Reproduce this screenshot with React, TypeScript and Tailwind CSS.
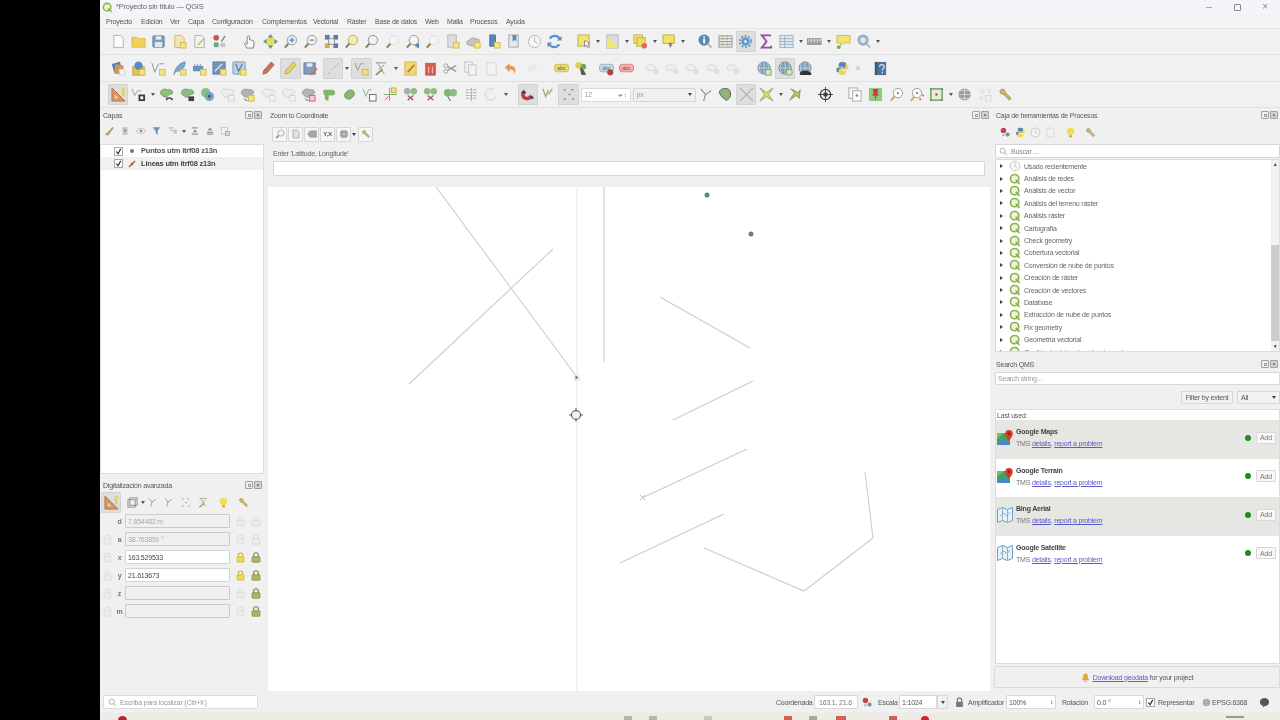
import type { ReactElement, ReactNode } from 'react'

// QGIS main window, blurred a touch because the source frame is a video still.

const mag = (lens: string, glass = '#8a8a8a') => (
  <>
    <path d="M6 10L2 14.5" stroke="#7a6a3a" strokeWidth="2.2" />
    <circle cx="9.5" cy="6.5" r="5" fill={lens} stroke={glass} />
  </>
)
const blob = (fill: string, line: string) => (
  <path d="M1.5 6c0-3 4-4.5 6-3.5s5-.5 6.5 1.500.5 4-2.500 4-2 4-4.500 3-5.500-2.500-5.500-5z" fill={fill} stroke={line} />
)
const green = blob('#7fb56c', '#5f9550')
const gray = blob('#a9a9a9', '#8f8f8f')
const pale = blob('#eeeeee', '#c9c9c9')
const badge = <rect x="9" y="9" width="6" height="6" fill="#f7e46f" stroke="#c7b24a" />
const paleBadge = <rect x="9" y="9" width="6" height="6" fill="#f3f3f3" stroke="#cfcfcf" />
const doc = (fill = '#ffffff', line = '#a3a3a3') => <path d="M3 1.500h7l3 3v10H3z" fill={fill} stroke={line} />
const abc = (fill: string, line: string, ink: string) => (
  <>
    <rect x="0.500" y="3.500" width="15" height="8" rx="3" fill={fill} stroke={line} />
    <text x="8" y="9.500" fontSize="5.500" fontWeight="700" fill={ink} textAnchor="middle" fontFamily="Liberation Sans">abc</text>
  </>
)
const paleAbc = (
  <>
    <rect x="1" y="4" width="10" height="6" rx="3" fill="#eeeeee" stroke="#d5d5d5" />
    <circle cx="11.500" cy="11" r="3" fill="#dddddd" />
  </>
)
const globe = (extra: ReactNode) => (
  <>
    <circle cx="7.500" cy="7.500" r="6.500" fill="#6f93ad" stroke="#4f7288" />
    <path d="M7.500 1v13M1 7.500h13M4 2.500c-2 3-2 7 0 10M11 2.500c2 3 2 7 0 10" stroke="#b9ced9" fill="none" />
    {extra}
  </>
)
const scissors = (tint: string) => (
  <>
    <circle cx="4.500" cy="4.500" r="3.500" fill={tint} />
    <circle cx="11.500" cy="4.500" r="3.500" fill="#7fb56c" />
    <path d="M5 9l6 5M11 9l-6 5" stroke="#a0406a" strokeWidth="1.400" />
  </>
)

const icons: Record<string, ReactElement> = {
  newDoc: doc(),
  folder: <path d="M1 3.500h5l1.500 1.500H15v9H1z" fill="#f4c93f" stroke="#dcae2b" />,
  save: (
    <>
      <rect x="2" y="2" width="12" height="12" rx="1" fill="#6a8db2" stroke="#4f6f92" />
      <rect x="5" y="2.500" width="6" height="3.500" fill="#e8eef4" />
      <rect x="4" y="8.500" width="8" height="5.500" fill="#dfe6ee" />
    </>
  ),
  saveAs: <>{doc('#f6e3a8', '#c9ad5a')}{badge}</>,
  layout: (
    <>
      {doc('#f4f4f4', '#a3a3a3')}
      <path d="M6 12l7-7" stroke="#c8b24a" strokeWidth="1.600" />
    </>
  ),
  styles: (
    <>
      <circle cx="4.500" cy="4" r="3" fill="#c0392b" />
      <rect x="2" y="9" width="5" height="5" fill="#4f9a6a" />
      <path d="M10 8l4-6" stroke="#777" strokeWidth="1.500" />
      <rect x="9" y="9.500" width="5" height="4.500" fill="#bbbbbb" />
    </>
  ),
  hand: <path d="M5 15l-2.500-5 1-1 2 2V3l1.500-1 1 1v3l2 .5 2.500 1 .5 3-1 4.500z" fill="#fbfbfb" stroke="#6b6b6b" />,
  panSel: (
    <>
      <rect x="4.500" y="4.500" width="7" height="7" fill="#f1d13d" />
      <path d="M8 0l3 4H5zM8 16l3-4H5zM0 8l4-3v6zM16 8l-4-3v6z" fill="#4d8c66" />
    </>
  ),
  zoomIn: <>{mag('#e6eef8')}<path d="M7 6.500h5M9.500 4v5" stroke="#3e6ea8" strokeWidth="1.400" /></>,
  zoomOut: <>{mag('#f4f4f4')}<path d="M7 6.500h5" stroke="#5f7f9f" strokeWidth="1.400" /></>,
  zoomFull: (
    <>
      <rect x="1" y="1" width="5" height="5" fill="#3b6aa3" />
      <rect x="10" y="1" width="5" height="5" fill="#3b6aa3" />
      <rect x="1" y="10" width="5" height="5" fill="#c9a32e" />
      <rect x="10" y="10" width="5" height="5" fill="#3b6aa3" />
      <rect x="5" y="5" width="6" height="6" fill="#f3f3f3" stroke="#7a7a7a" />
    </>
  ),
  zoomLayer: mag('#f6eda6', '#a09a4e'),
  zoomSel: mag('#f4f4f0', '#777777'),
  zoomNative: mag('#f6f6f6', '#d6d6d6'),
  zoomLast: <>{mag('#f4f4f4')}<path d="M15 9l-5 3.500 5 3z" fill="#3c74ad" /></>,
  zoomNext: mag('#f6f6f6', '#d6d6d6'),
  newMap: <><rect x="3" y="1" width="9" height="13" fill="#dcdcdc" stroke="#a9a9a9" />{badge}</>,
  map3d: <><path d="M1 8l6-4 7 2v5l-7 2-6-2z" fill="#bdbdbd" stroke="#9a9a9a" />{badge}</>,
  bookNew: <><path d="M4 1h6v12H4z" fill="#3d75b5" stroke="#2f5f96" />{badge}</>,
  bookShow: <><rect x="3" y="1" width="10" height="13" fill="#e6e6e6" stroke="#9a9a9a" /><path d="M7 1v7l2-2 2 2V1" fill="#3d75b5" /></>,
  clock: <><circle cx="8" cy="8" r="6.500" fill="#f7f7f7" stroke="#a9a9a9" /><path d="M8 3.500V8l3 2" stroke="#a9a9a9" fill="none" /></>,
  refresh: (
    <>
      <path d="M13.500 5A6 6 0 0 0 3 5" stroke="#3b83bd" strokeWidth="2.400" fill="none" />
      <path d="M2.500 11A6 6 0 0 0 13 11" stroke="#3b83bd" strokeWidth="2.400" fill="none" />
      <path d="M15.500 2v5h-5zM.5 14V9h5z" fill="#3b83bd" />
    </>
  ),
  selFeat: <><rect x="1" y="1" width="12" height="12" fill="#f4e25d" stroke="#b1a343" /><path d="M8 7l6 3-2.500 1 2 3-1.500 1-2-3-2 1.500z" fill="#fff" stroke="#777" /></>,
  selBox: <><rect x="2" y="1" width="12" height="14" fill="#d9d9d9" stroke="#aaa" /><path d="M2 3l12 12H2z" fill="#f4e25d" /></>,
  deselect: <><rect x="1" y="1" width="9" height="9" fill="#f4e25d" stroke="#b59f32" /><rect x="4" y="4" width="9" height="9" fill="#f4d83f" stroke="#b59f32" /><circle cx="12" cy="12.500" r="3" fill="#d9534f" /></>,
  selLoc: <><rect x="1" y="1" width="12" height="9" fill="#f4e14f" stroke="#b59f32" /><path d="M9 9c-2 0-2.500 2-1.500 3l1.500 3 1.500-3c1-1 .5-3-1.500-3z" fill="#777" /></>,
  identify: <><circle cx="6.500" cy="6.500" r="6" fill="#3d78b2" /><rect x="5.500" y="5" width="2" height="5" fill="#fff" /><rect x="5.500" y="2.500" width="2" height="1.500" fill="#fff" /><path d="M10 10l4.500 4.500" stroke="#aaa" strokeWidth="2" /></>,
  attrStat: <><rect x="1" y="2" width="14" height="12" fill="#e8e8e8" stroke="#888" /><path d="M1 5h14M1 8h14M1 11h14" stroke="#6e9f5f" /><path d="M5 2v12M10 2v12" stroke="#b65a4a" strokeDasharray="1 2" /></>,
  gear: <><circle cx="8" cy="8" r="4.500" fill="#4d8fc9" /><circle cx="8" cy="8" r="6" fill="none" stroke="#4d8fc9" strokeWidth="2" strokeDasharray="2 1.800" /><circle cx="8" cy="8" r="1.600" fill="#dce9f4" /></>,
  sigma: <path d="M13 1.500H3l5 6.500-5 6.500h10v-2" fill="none" stroke="#8e2c96" strokeWidth="2" />,
  table: <><rect x="1" y="1.500" width="14" height="13" fill="#dfe9f3" stroke="#8ba6c0" /><path d="M1 5h14M1 8h14M1 11h14M6 1.500v13" stroke="#8ba6c0" /></>,
  ruler: <><rect x="0" y="5" width="15" height="6" fill="#9a9a9a" stroke="#777" /><path d="M2 5v3M5 5v3M8 5v3M11 5v3M14 5v3" stroke="#eee" /></>,
  note: <><path d="M1 1.500h14v8H8l-3 3v-3H1z" fill="#f4e25d" stroke="#c5b23f" /><circle cx="3" cy="14" r="2" fill="#6a9a55" /></>,
  search: <><circle cx="7.500" cy="6.500" r="6" fill="#8aa5bd" /><circle cx="7.500" cy="6.500" r="3" fill="#dbe7f0" /><path d="M11 10l4 4.500" stroke="#aaa" strokeWidth="2" /></>,

  layerMgr: <><rect x="2" y="2" width="9" height="10" fill="#3f6fa5" transform="rotate(-15 6 7)" /><rect x="4" y="4" width="9" height="10" fill="#c58a3a" transform="rotate(8 8 9)" />{paleBadge}</>,
  gpkg: <><rect x="2" y="6" width="12" height="9" fill="#e5c23a" stroke="#b2932a" /><circle cx="8" cy="5" r="4.500" fill="#3f7cb1" />{badge}</>,
  vertex: <><path d="M1 2l3 10 4-9M9 3h5" fill="none" stroke="#7e7e7e" />{badge}</>,
  feather: <><path d="M2 15C3 7 8 2 14 1c0 6-4 10-9 10" fill="#6d9bc4" stroke="#4e7da8" />{badge}</>,
  chip: <><rect x="1" y="5" width="11" height="6" rx="1" fill="#4b84bc" /><path d="M3 3v2M6 3v2M9 3v2" stroke="#888" />{badge}</>,
  pic: <><rect x="1" y="1" width="13" height="13" fill="#5d85ad" stroke="#456c92" /><path d="M3 11l8-8" stroke="#cfe0ee" strokeWidth="1.500" />{badge}</>,
  vPoly: <><rect x="1" y="1" width="13" height="13" rx="1" fill="#b7cfe3" stroke="#5f87a8" /><path d="M4 3l3 8 4-8" fill="none" stroke="#4a6f8e" strokeWidth="1.400" />{badge}</>,
  pencilR: <path d="M11 1l3 3-8 9-4 1 1-4z" fill="#c0603d" stroke="#8c5a3a" />,
  pencilY: <path d="M11 1l3 3-8 9-4 1 1-4z" fill="#ecd24a" stroke="#b7a135" />,
  saveEdit: <><rect x="1" y="2" width="12" height="12" fill="#6a8db2" stroke="#4f6f92" /><rect x="4" y="2.500" width="6" height="3.500" fill="#e8eef4" /><path d="M8 14l6-7 1.500 1.500-6 7z" fill="#c9553c" /></>,
  line: <path d="M2 14L14 2" stroke="#a8a8a8" strokeDasharray="3 1.500" />,
  addVert: <><path d="M1 2l3 8 3-7h4" fill="none" stroke="#7f9f6f" />{badge}</>,
  tools: <><path d="M2 2h11M4 2l7 12M5 9l6-5" stroke="#8a7f5f" fill="none" /><path d="M2 15l7-6" stroke="#6a9a55" strokeWidth="2" /></>,
  editNote: <><rect x="2" y="1" width="12" height="14" fill="#f1d75a" stroke="#c9ae35" /><path d="M5 12l7-8" stroke="#a85a2a" strokeWidth="1.600" /></>,
  trash: <><rect x="3" y="4" width="10" height="11" fill="#d9442f" stroke="#a5321f" /><rect x="2" y="2" width="12" height="2" fill="#d9442f" /><path d="M6 6v7M10 6v7" stroke="#f6c9bf" /></>,
  scissors: <><circle cx="3" cy="5" r="2" fill="#fff" stroke="#888" /><circle cx="3" cy="11" r="2" fill="#fff" stroke="#888" /><path d="M5 6l9 5M5 10l9-5" stroke="#888" strokeWidth="1.400" /></>,
  copy: <><rect x="2" y="1" width="8" height="11" fill="#f3f3f3" stroke="#bbb" /><rect x="6" y="4" width="8" height="11" fill="#f3f3f3" stroke="#bbb" /></>,
  paste: <rect x="3" y="2" width="10" height="13" fill="#f3f3f3" stroke="#d0d0d0" />,
  undo: <path d="M6 2L1 7l5 5V9c3 0 5 1 5 5 3-6 0-9-5-9z" fill="#e08a3c" />,
  redo: <path d="M10 2l5 5-5 5V9c-3 0-5 1-5 5-3-6 0-9 5-9z" fill="#e7e7e7" />,
  abcY: abc('#ecd85c', '#c4b03a', '#6b6b3a'),
  abcPin: (
    <>
      <circle cx="5" cy="4.500" r="3.500" fill="#e2c72f" />
      <circle cx="10" cy="6" r="3" fill="#5d9a4d" />
      <path d="M6 7l2 8h5l-3-6" fill="#4b3a18" />
    </>
  ),
  abcDot: <>{abc('#c6d3e2', '#8aa3bd', '#52708e')}<circle cx="12" cy="12" r="3.300" fill="#a5262a" /></>,
  abcR: abc('#f2a6a6', '#d66a6a', '#a83a3a'),
  paleAbc,
  gPlus: globe(<rect x="9" y="9" width="6" height="6" fill="#cfe8b8" stroke="#5d9a4d" />),
  gGreen: globe(<circle cx="12" cy="12" r="3.300" fill="#cfe8b8" stroke="#5d9a4d" />),
  gCar: globe(<path d="M2 13c1-4 10-4 12 0v2H2z" fill="#111" />),
  python: (
    <>
      <path d="M8 1C4 1 4 3 4 4v2h5v1H3C1 7 1 12 3 12h2v-2c0-1 1-2 2-2h3c1 0 2-1 2-2V3c0-1-1-2-4-2z" fill="#3f74a8" />
      <path d="M8 15c4 0 4-2 4-3v-2H7V9h6c2 0 2-5 0-5h-2v2c0 1-1 2-2 2H6c-1 0-2 1-2 2v3c0 1 1 2 4 2z" fill="#f1cf45" />
    </>
  ),
  help: <><rect x="2" y="1" width="12" height="14" fill="#2f5f8f" /><rect x="2" y="1" width="2.500" height="14" fill="#1e3f60" /><path d="M7 6c0-3 5-3 5 0 0 2-2 2-2 4M10 11.500v1.500" fill="none" stroke="#cfe1f0" strokeWidth="1.300" /></>,

  digi: <><path d="M1 15V1l14 14z" fill="#d98b4a" stroke="#a7652e" /><path d="M4 12V8l4 4z" fill="#eed9b0" /><rect x="11.500" y="1" width="3" height="9" fill="#e9d14a" /></>,
  vertLayer: <><path d="M1 2l3 7 3-5h4" fill="none" stroke="#7f9f6f" /><rect x="8" y="8" width="7" height="7" fill="#222" /><rect x="10" y="10" width="3" height="3" fill="#fff" /></>,
  gA: <>{green}<path d="M8 14c0-3 6-3 6 0" fill="none" stroke="#222" strokeWidth="1.500" /></>,
  gB: <>{green}<rect x="9" y="10" width="6" height="5" fill="#222" /></>,
  gC: <><circle cx="6" cy="6" r="5" fill="#7fb56c" /><circle cx="10" cy="10" r="5" fill="#5d99c6" /><circle cx="10" cy="10" r="1.600" fill="#235" /></>,
  pBlob: <>{pale}{paleBadge}</>,
  gYellow: <>{gray}<path d="M3 11l3 4h3z" fill="#6a9a55" />{badge}</>,
  gPink: <>{gray}<path d="M3 11l3 4h3z" fill="#6a9a55" /><rect x="9" y="9" width="6" height="6" fill="#f6c2d0" stroke="#d0426e" /></>,
  gMerge: <path d="M2 3h9c4 0 4 6 0 6H7v5c-3 1-4-1-4-2V9C1 8 1 4 2 3z" fill="#6fa85c" />,
  gSplit: <rect x="2.500" y="4" width="11" height="8" rx="4" fill="#7fa95a" stroke="#5f8a44" transform="rotate(-40 8 8)" />,
  vertTool: <><path d="M1 2l3 8 3-7h3" fill="none" stroke="#7f9f6f" /><rect x="8" y="8" width="7" height="7" fill="#fff" stroke="#555" /></>,
  splitLine: <><path d="M7 1v14M1 8h14" stroke="#6a9a55" /><rect x="9" y="1" width="5" height="5" fill="#f4e25d" stroke="#b5a132" /><path d="M2 14l4-4" stroke="#c9404a" /></>,
  sA: scissors('#a0a0a0'),
  sB: scissors('#7fb56c'),
  sC: <><circle cx="5" cy="6" r="4" fill="#6fa85c" /><circle cx="11" cy="6" r="4" fill="#7fb56c" /><path d="M5 10l3 5" stroke="#333" /></>,
  lines: <path d="M2 3h12M2 6h12M2 9h12M2 12h12M8 1v14" stroke="#9a9a9a" strokeDasharray="3 1" />,
  rotPale: <path d="M11 3a6 6 0 1 0 2 7" fill="none" stroke="#dddddd" strokeWidth="2" />,
  magnet: <><path d="M3 4a6 6 0 1 0 10 6l-3-2a2.500 2.500 0 1 1-4-2z" fill="#c41c25" /><path d="M1 6l3-3 3 3-3 2zM10 10l3-1 2 3-3 1z" fill="#333" /></>,
  snapMode: <path d="M2 2l3 8 3-7M12 2L8 8" fill="none" stroke="#7f9f6f" strokeWidth="1.400" />,
  snapDots: <path d="M3 3h2M11 3h2M8 8h2M3 13h2M12 13h2" stroke="#777" strokeWidth="1.600" />,
  y: <path d="M3 2l5 6 6-4M8 8l-2 7" fill="none" stroke="#7f8f7f" strokeWidth="1.400" />,
  tracing: <path d="M2 4c2-3 8-3 10-1s2 7 0 9-3 3-5 1-3-2-4-4-2-3-1-5z" fill="#7fa96c" stroke="#444" />,
  cross: <path d="M1 1l14 14M15 1L1 15" stroke="#a4aca4" strokeWidth="1.300" />,
  star: <path d="M1 1l7 5 7-5-5 7 5 7-7-5-7 5 5-7z" fill="#efd533" stroke="#6a9a55" />,
  trim: <path d="M3 14L8 6l-4-4 8 4 2-3-1 9-3-3z" fill="#a7bf50" stroke="#6d8a35" />,
  center: <><circle cx="8" cy="8" r="5.500" fill="none" stroke="#222" strokeWidth="1.400" /><path d="M8 0v16M0 8h16" stroke="#222" /><circle cx="8" cy="8" r="2.500" fill="#222" /></>,
  pages: <><rect x="1" y="1" width="9" height="11" fill="#fff" stroke="#999" /><rect x="5" y="4" width="9" height="11" fill="#fff" stroke="#999" /><circle cx="9.500" cy="9" r="1.300" fill="#c9404a" /></>,
  pin: <><rect x="1" y="1" width="14" height="14" fill="#7fc46f" /><path d="M5 2h6l-1 5 2 2H9l-1 6-1-6H4l2-2z" fill="#c41c25" /></>,
  magDot: <><path d="M6 10L2 14.500" stroke="#c9a32e" strokeWidth="2.200" /><circle cx="9.500" cy="6.500" r="5" fill="#fff" stroke="#8a8a8a" /><circle cx="9.500" cy="6.500" r="1.200" fill="#c9404a" /></>,
  magDots: <><path d="M6 10L2 14.500" stroke="#c9a32e" strokeWidth="2.200" /><circle cx="8.500" cy="6.500" r="5" fill="#fff" stroke="#8a8a8a" /><circle cx="8.500" cy="6.500" r="1.200" fill="#c9404a" /><circle cx="12" cy="13" r="1" fill="#c9404a" /><circle cx="15" cy="9" r="1" fill="#c9404a" /></>,
  frame: <><rect x="2" y="2" width="12" height="12" fill="#dff0cc" stroke="#4f7f50" strokeWidth="1.400" /><circle cx="8" cy="8" r="1.300" fill="#c41c25" /><path d="M1 1h2v2H1zM13 1h2v2h-2zM1 13h2v2H1zM13 13h2v2h-2z" fill="#4f7f50" /></>,
  net: <><circle cx="8" cy="8" r="6.500" fill="#8c8c8c" /><path d="M1.500 8h13M8 1.500v13M3 4h10M3 12h10" stroke="#eee" strokeWidth=".7" /></>,
  xy: <><path d="M2 2l4 5M6 2L2 7M10 2l2 3 2-3M12 5v3" stroke="#d5d5d5" fill="none" /><rect x="8" y="9" width="6" height="6" fill="none" stroke="#d5d5d5" /><path d="M1 12h5M3.500 9.500v5" stroke="#d5d5d5" /></>,
  wrench: <path d="M2 4l2-2 3 1 1 3 6 6-2 2-6-6-3-1z" fill="#c9ad3d" stroke="#8c8c6a" />,

  brush: <path d="M2 13l5-3 2 2-3 3zM7 9l7-7 1 1-6 8z" fill="#c9a32e" stroke="#8a7a3a" />,
  addGrp: <><rect x="4" y="2" width="8" height="12" fill="#bcbcbc" /><circle cx="8" cy="7" r="2" fill="#8a8a8a" /></>,
  eye: <><ellipse cx="8" cy="8" rx="7" ry="4" fill="#e6e6e6" stroke="#aaa" /><circle cx="8" cy="8" r="2" fill="#5d85ad" /></>,
  filter: <path d="M1 2h12L9 8v6l-3-2V8z" fill="#607f9e" />,
  exprFilter: <><path d="M1 3h8M3 7h5" stroke="#8aa0b0" strokeWidth="1.400" /><path d="M9 6l5 0v6H9z" fill="#a9c58f" /></>,
  expand: <path d="M3 2h10v2H3zM8 5l4 5H4zM3 12h10v2H3z" fill="#8a8a8a" />,
  collapse: <path d="M8 2l4 5H4zM3 9h10v2H3zM3 12h10v2H3z" fill="#8a8a8a" />,
  rmLayer: <><rect x="2" y="2" width="10" height="11" fill="#f4f4f4" stroke="#aaa" /><rect x="9" y="9" width="6" height="6" fill="#f8d0d0" stroke="#d9534f" /></>,

  zcMag: mag('#eef2f6', '#7a7a7a'),
  zcDoc: doc('#dddddd', '#888888'),
  zcClear: <path d="M1 8l4-5h10v10H5z" fill="#9a9a9a" stroke="#777" />,
  zcGlobe: <><circle cx="8" cy="8" r="6.500" fill="#8a8a8a" /><path d="M1.500 8h13M8 1.500v13" stroke="#ddd" /></>,

  procs: <><circle cx="5" cy="5" r="4" fill="#b12a36" /><circle cx="11" cy="11" r="3" fill="#5d7f9f" /><circle cx="5" cy="12" r="1.500" fill="#7a8a9a" /></>,
  yellowBulb: <><circle cx="8" cy="6.500" r="5.500" fill="#f1d940" /><path d="M6 12h4v3H6z" fill="#9d9d5a" /></>,
  docPale: doc('#f3f3f3', '#c7c7c7'),
}

function Ic({ n, size = 15 }: { n: string; size?: number }) {
  return (
    <svg viewBox="0 0 16 16" width={size} height={size} className="shrink-0 opacity-85">
      {icons[n]}
    </svg>
  )
}

// one toolbar button
function T({ n, on }: { n: string; on?: boolean }) {
  return (
    <div className={on ? 'flex h-[21px] w-[20.3px] shrink-0 items-center justify-center rounded-[1px] border border-[#d2d2d2] bg-[#dedede]' : 'flex h-[21px] w-[20.3px] shrink-0 items-center justify-center'}>
      <Ic n={n} />
    </div>
  )
}

function Drop() {
  return (
    <div className="flex w-[8px] shrink-0 items-center justify-center">
      <div className="h-0 w-0 border-x-[2px] border-t-[3px] border-x-transparent border-t-[#555]" />
    </div>
  )
}

function Q({ size = 12 }: { size?: number }) {
  return (
    <svg viewBox="0 0 16 16" width={size} height={size} className="shrink-0">
      <circle cx="7.500" cy="7.500" r="5.500" fill="#eef5e2" stroke="#8bb24a" strokeWidth="2.200" />
      <path d="M9 9l5 5.500" stroke="#8bb24a" strokeWidth="2.400" />
    </svg>
  )
}

function DockBtns() {
  return (
    <div className="flex gap-[1px]">
      <div className="flex h-[8px] w-[8px] items-center justify-center rounded-[1px] border border-[#a0a0a0]">
        <div className="h-[3px] w-[3px] border border-[#a0a0a0]" />
      </div>
      <div className="flex h-[8px] w-[8px] items-center justify-center rounded-[1px] border border-[#a0a0a0] bg-[#d4d4d4] text-[6px] leading-none text-[#444]">×</div>
    </div>
  )
}

function DockHead({ title }: { title: string }) {
  return (
    <div className="flex h-[14px] shrink-0 items-center justify-between pl-[3px] pr-[2px] text-[#555]">
      <span>{title}</span>
      <DockBtns />
    </div>
  )
}

function Check() {
  return (
    <div className="flex h-[9px] w-[9px] shrink-0 items-center justify-center border border-[#a8a8a8] bg-white">
      <svg viewBox="0 0 8 8" width="7" height="7">
        <path d="M1.500 4l2 2.500L6.500 1" fill="none" stroke="#222" strokeWidth="1.200" />
      </svg>
    </div>
  )
}

function Lock({ tone }: { tone: 'pale' | 'yellow' }) {
  return (
    <svg viewBox="0 0 12 14" width="9" height="11" className="shrink-0">
      <path d="M3 6V4a3 3 0 0 1 6 0v2" fill="none" stroke={tone === 'yellow' ? '#c4b22f' : '#dcdcdc'} strokeWidth="1.400" />
      <rect x="1.500" y="6" width="9" height="7" rx="1" fill={tone === 'yellow' ? '#efdf45' : '#ececec'} stroke={tone === 'yellow' ? '#c4b22f' : '#d8d8d8'} />
    </svg>
  )
}

function CadLock({ tone }: { tone: 'pale' | 'olive' }) {
  return (
    <svg viewBox="0 0 12 14" width="10" height="11" className="shrink-0">
      <path d="M3 6V4a3 3 0 0 1 6 0v2" fill="none" stroke={tone === 'olive' ? '#7f8a4a' : '#dcdcdc'} strokeWidth="1.400" />
      <rect x="1" y="6" width="10" height="7" rx="1" fill={tone === 'olive' ? '#b8b35a' : '#ececec'} stroke={tone === 'olive' ? '#7f8a4a' : '#d8d8d8'} />
    </svg>
  )
}

const cadRows = [
  { label: 'd', value: '7.854482 m', live: false, left: false, lock: 'pale', cad: 'pale' },
  { label: 'a', value: '38.763850 °', live: false, left: true, lock: 'pale', cad: 'pale' },
  { label: 'x', value: '163.529533', live: true, left: true, lock: 'yellow', cad: 'olive' },
  { label: 'y', value: '21.613673', live: true, left: true, lock: 'yellow', cad: 'olive' },
  { label: 'z', value: '', live: false, left: true, lock: 'pale', cad: 'olive' },
  { label: 'm', value: '', live: false, left: true, lock: 'pale', cad: 'olive' },
] as const

const tree = [
  'Análisis de redes',
  'Análisis de vector',
  'Análisis del terreno ráster',
  'Análisis ráster',
  'Cartografía',
  'Check geometry',
  'Cobertura vectorial',
  'Conversión de nube de puntos',
  'Creación de ráster',
  'Creación de vectores',
  'Database',
  'Extracción de nube de puntos',
  'Fix geometry',
  'Geometría vectorial',
  'Gestión de datos de nube de puntos',
]

const services = [
  { name: 'Google Maps', icon: 'pin', shade: true },
  { name: 'Google Terrain', icon: 'pin', shade: false },
  { name: 'Bing Aerial', icon: 'map', shade: true },
  { name: 'Google Satellite', icon: 'map', shade: false },
]

const menu = [
  ['Proyecto', 'w-[35px]'],
  ['Edición', 'w-[29px]'],
  ['Ver', 'w-[18px]'],
  ['Capa', 'w-[24px]'],
  ['Configuración', 'w-[50px]'],
  ['Complementos', 'w-[51px]'],
  ['Vectorial', 'w-[34px]'],
  ['Ráster', 'w-[28px]'],
  ['Base de datos', 'w-[50px]'],
  ['Web', 'w-[22px]'],
  ['Malla', 'w-[23px]'],
  ['Procesos', 'w-[36px]'],
  ['Ayuda', 'w-[30px]'],
]

function ServiceIcon({ kind }: { kind: string }) {
  if (kind === 'pin') {
    return (
      <svg viewBox="0 0 16 16" width="16" height="16" className="shrink-0">
        <rect x="0" y="3" width="13" height="12" fill="#3fa35a" />
        <path d="M0 15l7-6 6 6z" fill="#4a86d8" />
        <path d="M0 3h7L0 9z" fill="#79b96a" />
        <path d="M12 0a3.800 3.800 0 0 0-3.800 3.800C8.200 6.500 12 11 12 11s3.800-4.500 3.800-7.200A3.800 3.800 0 0 0 12 0z" fill="#d8392f" />
        <circle cx="12" cy="3.800" r="1.300" fill="#8e1c16" />
      </svg>
    )
  }
  return (
    <svg viewBox="0 0 16 16" width="16" height="16" className="shrink-0">
      <path d="M.5 2.500l5-2 5 2 5-2v13l-5 2-5-2-5 2z" fill="#e8f1f8" stroke="#6d9dc4" />
      <path d="M5.500.5v13M10.500 2.500v13M3 9l4-3 3 3 3-4" fill="none" stroke="#8ab3d2" />
    </svg>
  )
}

function MapCanvas() {
  return (
    <svg viewBox="268 187 722 504" width="722" height="504" className="block bg-white">
      <path d="M577 187V691" stroke="#efe8ef" strokeWidth="1.200" />
      <g fill="none" stroke="#cfcdc2" strokeWidth="1.100">
        <path d="M436 187L577 377" />
        <path d="M409 384L553 249" />
        <path d="M660 297L750 348" />
        <path d="M673 420L753 381" />
        <path d="M642 498L747 449" />
        <path d="M620 563L724 514" />
        <path d="M704 548L804 591L873 538L865 472" />
      </g>
      <path d="M604 187V362" stroke="#dcdcdc" strokeWidth="1.600" />
      <circle cx="707" cy="195" r="2.500" fill="#5b8a66" />
      <circle cx="751" cy="234" r="2.500" fill="#5b8a66" />
      <rect x="574" y="375" width="6" height="6" fill="#ececec" />
      <circle cx="576.500" cy="377.500" r="1.200" fill="#666" />
      <path d="M640 495l5 5M645 495l-5 5" stroke="#d2b4d2" strokeWidth="1" />
      <circle cx="576" cy="415" r="4.500" fill="#f7f1f7" stroke="#6a5a70" strokeWidth="1.200" />
      <path d="M576 408v4M576 418v4M569 415h3M580 415h3" stroke="#6a5a70" strokeWidth="1" />
    </svg>
  )
}

export default function App() {
  return (
    <div className="flex h-[720px] w-[1280px] overflow-hidden bg-black text-[7px] leading-none tracking-[-0.2px] text-[#555] [font-family:'Liberation_Sans',sans-serif]">
      <div className="ml-[100px] flex h-full w-[1180px] flex-col overflow-hidden bg-[#f0f0f0] blur-[0.45px]">
        {/* title bar */}
        <div className="flex h-[14px] shrink-0 items-center bg-[#f5f4f8] pl-[2px]">
          <Q size={11} />
          <span className="ml-[3px] text-[7.5px] text-[#666]">*Proyecto sin título — QGIS</span>
          <div className="ml-auto flex items-center text-[#888]">
            <div className="h-px w-[6px] bg-[#aaa]" />
            <div className="ml-[22px] h-[7px] w-[7px] rounded-[1px] border border-[#888]" />
            <span className="ml-[21px] mr-[12px] text-[10px] leading-none">×</span>
          </div>
        </div>
        {/* menu */}
        <div className="flex h-[14px] shrink-0 items-center bg-[#f3f3f5] pl-[6px] text-[#555]">
          {menu.map(([label, width]) => (
            <span key={label} className={width}>{label}</span>
          ))}
        </div>

        {/* toolbar 1 */}
        <div className="flex h-[26px] shrink-0 items-center border-t border-[#e6e6e6] bg-[#f1f1f1] pl-[8px]">
          {['newDoc', 'folder', 'save', 'saveAs', 'layout', 'styles'].map((n) => <T key={n} n={n} />)}
          <div className="w-[10px]" />
          {['hand', 'panSel', 'zoomIn', 'zoomOut', 'zoomFull', 'zoomLayer', 'zoomSel', 'zoomNative', 'zoomLast', 'zoomNext', 'newMap', 'map3d', 'bookNew', 'bookShow', 'clock', 'refresh'].map((n) => <T key={n} n={n} />)}
          <div className="w-[9.5px]" />
          <T n="selFeat" /><Drop />
          <T n="selBox" /><Drop />
          <T n="deselect" /><Drop />
          <T n="selLoc" /><Drop />
          <div className="w-[8px]" />
          <T n="identify" />
          <T n="attrStat" />
          <T n="gear" on />
          <T n="sigma" />
          <T n="table" /><Drop />
          <T n="ruler" /><Drop />
          <T n="note" />
          <T n="search" /><Drop />
        </div>
        {/* toolbar 2 */}
        <div className="flex h-[27px] shrink-0 items-center border-t border-[#e0e0e0] bg-[#f1f1f1] pl-[8px]">
          {['layerMgr', 'gpkg', 'vertex', 'feather', 'chip', 'pic', 'vPoly'].map((n) => <T key={n} n={n} />)}
          <div className="w-[8px]" />
          <T n="pencilR" />
          <div className="w-[2px]" />
          <T n="pencilY" on />
          <T n="saveEdit" />
          <div className="w-[2px]" />
          <T n="line" on />
          <Drop />
          <T n="addVert" on />
          <T n="tools" />
          <Drop />
          {['editNote', 'trash', 'scissors', 'copy', 'paste', 'undo', 'redo'].map((n) => <T key={n} n={n} />)}
          <div className="w-[9px]" />
          <T n="abcY" />
          <T n="abcPin" />
          <div className="w-[5px]" />
          <T n="abcDot" />
          <T n="abcR" />
          <div className="w-[5px]" />
          {[1, 2, 3, 4, 5].map((i) => <T key={i} n="paleAbc" />)}
          <div className="w-[11px]" />
          <T n="gPlus" />
          <T n="gGreen" on />
          <T n="gCar" />
          <div className="w-[17px]" />
          <T n="python" />
          <div className="flex w-[10px] justify-center text-[9px] text-[#aaa]">»</div>
          <div className="w-[8px]" />
          <T n="help" />
        </div>
        {/* toolbar 3 */}
        <div className="flex h-[27px] shrink-0 items-center border-y border-[#e0e0e0] bg-[#f1f1f1] pl-[8px]">
          <T n="digi" on />
          <T n="vertLayer" />
          <Drop />
          {['gA', 'gB', 'gC', 'pBlob', 'gYellow', 'pBlob', 'pBlob', 'gPink', 'gMerge', 'gSplit', 'vertTool', 'splitLine', 'sA', 'sB', 'sC', 'lines'].map((n, i) => <T key={i} n={n} />)}
          <T n="rotPale" />
          <Drop />
          <div className="w-[8px]" />
          <T n="magnet" on />
          <T n="snapMode" />
          <T n="snapDots" on />
          <div className="ml-[2px] flex h-[14px] w-[50px] shrink-0 items-center justify-between rounded-[2px] border border-[#dadada] bg-white px-[3px] text-[#999]">
            <span>12</span>
            <span className="text-[6px] leading-none">◂▪ ↕</span>
          </div>
          <div className="ml-[2px] flex h-[14px] w-[63px] shrink-0 items-center justify-between rounded-[2px] border border-[#d4d4d4] bg-[#f0f0f0] px-[3px] text-[#999]">
            <span>px</span>
            <div className="h-0 w-0 border-x-[2px] border-t-[3px] border-x-transparent border-t-[#444]" />
          </div>
          <T n="y" />
          <T n="tracing" />
          <T n="cross" on />
          <T n="star" />
          <Drop />
          <T n="trim" />
          <div className="w-[10px]" />
          <T n="center" />
          <div className="w-[10px]" />
          <T n="pages" />
          <T n="pin" />
          <T n="magDot" />
          <T n="magDots" />
          <T n="frame" />
          <Drop />
          <T n="net" />
          <T n="xy" />
          <T n="wrench" />
        </div>

        {/* docks + map */}
        <div className="flex min-h-0 flex-1">
          {/* left docks */}
          <div className="flex w-[164px] shrink-0 flex-col">
            <DockHead title="Capas" />
            <div className="flex h-[22px] shrink-0 items-center pb-[4px] pl-[1px]">
              {['brush', 'addGrp', 'eye', 'filter', 'exprFilter'].map((n) => (
                <div key={n} className="flex w-[16px] justify-center"><Ic n={n} size={10} /></div>
              ))}
              <div className="flex w-[6px] justify-center"><div className="h-0 w-0 border-x-[2px] border-t-[3px] border-x-transparent border-t-[#555]" /></div>
              {['expand', 'collapse', 'rmLayer'].map((n) => (
                <div key={n} className="flex w-[15px] justify-center"><Ic n={n} size={10} /></div>
              ))}
            </div>
            <div className="h-[330px] shrink-0 border border-[#dcdcdc] bg-white">
              <div className="flex h-[12px] items-center pl-[13px]">
                <Check />
                <div className="ml-[7px] mr-[7px] h-[4px] w-[4px] rounded-full bg-[#5f8a5f]" />
                <span className="text-[7.500px] font-bold text-[#555]">Puntos utm itrf08 z13n</span>
              </div>
              <div className="flex h-[13px] items-center bg-[#f1f1f1] pl-[13px]">
                <Check />
                <svg viewBox="0 0 8 8" width="8" height="8" className="ml-[5px] mr-[5px]"><path d="M1 7L7 1M3 3l2 2" stroke="#c9502f" strokeWidth="1.400" /></svg>
                <span className="text-[7.500px] font-bold text-[#444]">Lineas utm itrf08 z13n</span>
              </div>
            </div>
            <div className="mt-[4px]"><DockHead title="Digitalización avanzada" /></div>
            <div className="flex h-[20px] shrink-0 items-center pl-[1px]">
              <T n="digi" on />
              <div className="w-[4px]" />
              <div className="flex w-[14px] justify-center"><svg viewBox="0 0 12 12" width="11" height="11"><rect x="1" y="3" width="8" height="8" fill="none" stroke="#888" /><rect x="3" y="1" width="8" height="8" fill="none" stroke="#888" /></svg></div>
              <Drop />
              <div className="flex w-[10px] justify-center"><Ic n="y" size={10} /></div>
              <div className="flex w-[22px] justify-center"><Ic n="y" size={10} /></div>
              <div className="flex w-[12px] justify-center"><Ic n="snapDots" size={11} /></div>
              <div className="flex w-[25px] justify-center"><Ic n="tools" size={11} /></div>
              <div className="flex w-[14px] justify-center"><Ic n="yellowBulb" size={11} /></div>
              <div className="flex w-[27px] justify-center"><Ic n="wrench" size={11} /></div>
            </div>
            {cadRows.map((r) => (
              <div key={r.label} className="flex h-[18px] shrink-0 items-center">
                <div className="flex w-[14px] justify-center">{r.left ? <Lock tone="pale" /> : null}</div>
                <span className="w-[11px] text-center font-bold text-[#777]">{r.label}</span>
                <div className={r.live ? 'flex h-[14px] w-[105px] items-center rounded-[1px] border border-[#d4d4d4] bg-white pl-[2px] text-[#444]' : 'flex h-[14px] w-[105px] items-center rounded-[1px] border border-[#cccccc] bg-[#f0f0f0] pl-[2px] text-[#aaa]'}>{r.value}</div>
                <div className="ml-[5px] flex w-[10px] justify-center"><Lock tone={r.lock} /></div>
                <div className="ml-[6px] flex w-[10px] justify-center"><CadLock tone={r.cad} /></div>
              </div>
            ))}
          </div>

          {/* centre */}
          <div className="ml-[4px] flex w-[722px] shrink-0 flex-col">
            <div className="flex h-[14px] shrink-0 items-center justify-between pl-[2px] pr-[1px] text-[#555]">
              <span>Zoom to Coordinate</span>
              <DockBtns />
            </div>
            <div className="flex h-[24px] shrink-0 items-center gap-[1px] pl-[4px]">
              {['zcMag', 'zcDoc', 'zcClear'].map((n) => (
                <div key={n} className="flex h-[15px] w-[15px] items-center justify-center rounded-[1px] border border-[#d6d6d6] bg-[#f6f6f6]"><Ic n={n} size={10} /></div>
              ))}
              <div className="flex h-[15px] w-[15px] items-center justify-center rounded-[1px] border border-[#d6d6d6] bg-[#f6f6f6] text-[6px] font-bold">Y,X</div>
              <div className="flex h-[15px] w-[15px] items-center justify-center rounded-[1px] border border-[#d6d6d6] bg-[#f6f6f6]"><Ic n="zcGlobe" size={10} /></div>
              <div className="h-0 w-0 border-x-[2px] border-t-[3px] border-x-transparent border-t-[#444]" />
              <div className="ml-[1px] flex h-[15px] w-[15px] items-center justify-center rounded-[1px] border border-[#d6d6d6] bg-[#f6f6f6]"><Ic n="wrench" size={10} /></div>
            </div>
            <div className="flex h-[14px] shrink-0 items-center pl-[5px] text-[#666]">Enter 'Latitude, Longitude'</div>
            <div className="mx-[5px] mt-px h-[15px] shrink-0 rounded-[1px] border border-[#d5d5d5] bg-white" />
            <div className="mt-[11px]"><MapCanvas /></div>
          </div>

          {/* right docks */}
          <div className="ml-[3px] flex w-[287px] shrink-0 flex-col">
            <DockHead title="Caja de herramientas de Procesos" />
            <div className="flex h-[22px] shrink-0 items-center pb-[1px] pl-[5px]">
              {['procs', 'python', 'clock', 'docPale'].map((n) => (
                <div key={n} className="flex w-[15px] justify-center"><Ic n={n} size={11} /></div>
              ))}
              <div className="ml-[5px] flex w-[15px] justify-center"><Ic n="yellowBulb" size={11} /></div>
              <div className="ml-[5px] flex w-[15px] justify-center"><Ic n="wrench" size={11} /></div>
            </div>
            <div className="ml-[2px] flex h-[14px] shrink-0 items-center rounded-[1px] border border-[#d6d6d6] bg-white pl-[3px] text-[#888]">
              <svg viewBox="0 0 12 12" width="9" height="9" className="mr-[3px]"><circle cx="5" cy="5" r="3.500" fill="none" stroke="#999" /><path d="M7.500 7.500L11 11" stroke="#999" /></svg>
              Buscar ...
            </div>
            <div className="ml-[2px] mt-px flex h-[193px] shrink-0 overflow-hidden border border-[#dcdcdc] bg-white">
              <div className="min-w-0 flex-1">
                <div className="flex h-[12.400px] items-center pl-[4px]">
                  <div className="h-0 w-0 border-y-[2px] border-l-[3px] border-y-transparent border-l-[#444]" />
                  <div className="ml-[6px] mr-[3px]"><Ic n="clock" size={12} /></div>
                  <span className="text-[#666]">Usado recientemente</span>
                </div>
                {tree.map((t) => (
                  <div key={t} className="flex h-[12.400px] items-center pl-[4px]">
                    <div className="h-0 w-0 border-y-[2px] border-l-[3px] border-y-transparent border-l-[#444]" />
                    <div className="ml-[6px] mr-[3px]"><Q size={12} /></div>
                    <span className="text-[#666]">{t}</span>
                  </div>
                ))}
              </div>
              <div className="flex w-[8px] shrink-0 flex-col items-center bg-[#f1f1f1]">
                <span className="pt-[2px] text-[5px] leading-none text-[#444]">▲</span>
                <div className="mt-[78px] h-[96px] w-full bg-[#cdcdcd]" />
                <span className="mt-[3px] text-[5px] leading-none text-[#444]">▼</span>
              </div>
            </div>
            <div className="mt-[5px]"><DockHead title="Search QMS" /></div>
            <div className="ml-[2px] mt-px flex h-[13px] shrink-0 items-center rounded-[1px] border border-[#d8d8d8] bg-white pl-[2px] text-[#999]">Search string...</div>
            <div className="mt-[4px] flex h-[16px] shrink-0 items-center justify-end">
              <div className="flex h-[13px] w-[52px] items-center justify-center rounded-[1px] border border-[#d6d6d6] bg-[#f2f2f2] text-[#555]">Filter by extent</div>
              <div className="ml-[4px] flex h-[13px] w-[43px] items-center justify-between rounded-[1px] border border-[#d6d6d6] bg-[#f2f2f2] px-[3px] text-[#555]">
                All
                <div className="h-0 w-0 border-x-[2px] border-t-[3px] border-x-transparent border-t-[#444]" />
              </div>
            </div>
            <div className="ml-[2px] mt-[4px] h-[255px] shrink-0 border border-[#dcdcdc] bg-white">
              <div className="flex h-[10px] items-center pl-[1px] text-[#555]">Last used:</div>
              {services.map((s) => (
                <div key={s.name} className={s.shade ? 'flex h-[38.500px] items-center bg-[#e6e6e3] pb-[3px] pl-[1px] pr-[3px]' : 'flex h-[38.500px] items-center bg-white pb-[3px] pl-[1px] pr-[3px]'}>
                  <ServiceIcon kind={s.icon} />
                  <div className="ml-[3px] flex flex-col gap-[5px]">
                    <span className="font-bold text-[#444]">{s.name}</span>
                    <span className="text-[#777]">TMS <span className="text-[#5a5ac8] underline">details</span>, <span className="text-[#5a5ac8] underline">report a problem</span></span>
                  </div>
                  <div className="ml-auto h-[6px] w-[6px] rounded-full bg-[#1f8a1f]" />
                  <div className="ml-[5px] flex h-[12px] w-[20px] items-center justify-center rounded-[1px] border border-[#d8d8d8] bg-[#f8f8f8] text-[#777]">Add</div>
                </div>
              ))}
            </div>
            <div className="ml-[1px] mt-[2px] flex h-[22px] shrink-0 items-center justify-center rounded-[1px] border border-[#dadada] bg-[#f0f0f0] text-[#555]">
              <svg viewBox="0 0 10 10" width="9" height="9" className="mr-[3px]"><path d="M5 .5C3 .5 2.500 2 2.500 4S1 7 1 8h8c0-1-1.500-2-1.500-4S7 .5 5 .5zM4 8.500h2V10H4z" fill="#e8a23c" /></svg>
              <span className="text-[#5a5ac8] underline">Download geodata</span>
              <span className="ml-[2px]">for your project</span>
            </div>
          </div>
        </div>

        {/* status bar */}
        <div className="flex h-[22px] shrink-0 items-center bg-[#f0f0f0] pl-[3px] text-[#555]">
          <div className="flex h-[14px] w-[155px] shrink-0 items-center rounded-[1px] border border-[#dcdcdc] bg-white pl-[4px] text-[#999]">
            <svg viewBox="0 0 12 12" width="9" height="9" className="mr-[3px]"><circle cx="5" cy="5" r="3.500" fill="none" stroke="#999" /><path d="M7.500 7.500L11 11" stroke="#999" /></svg>
            Escriba para localizar (Ctrl+K)
          </div>
          <span className="ml-[518px] w-[38px] shrink-0">Coordenada</span>
          <div className="flex h-[14px] w-[44px] shrink-0 items-center rounded-[1px] border border-[#d8d8d8] bg-white pl-[4px] text-[#777]">163.1, 21.6</div>
          <div className="ml-[2px] flex w-[14px] shrink-0 justify-center"><Ic n="procs" size={11} /></div>
          <span className="ml-[4px] w-[21px] shrink-0">Escala</span>
          <div className="flex h-[14px] w-[38px] shrink-0 items-center rounded-[1px] border border-[#d8d8d8] bg-white pl-[2px] text-[#555]">1:1024</div>
          <div className="flex h-[14px] w-[11px] shrink-0 items-center justify-center rounded-[1px] border border-[#d8d8d8] bg-[#f0f0f0]"><div className="h-0 w-0 border-x-[2px] border-t-[3px] border-x-transparent border-t-[#444]" /></div>
          <svg viewBox="0 0 12 14" width="9" height="11" className="ml-[7px] shrink-0"><path d="M3 6V4a3 3 0 0 1 6 0v2" fill="none" stroke="#666" strokeWidth="1.400" /><rect x="1.500" y="6" width="9" height="7" rx="1" fill="#777" /></svg>
          <span className="ml-[4px] w-[38px] shrink-0">Amplificador</span>
          <div className="flex h-[14px] w-[50px] shrink-0 items-center justify-between rounded-[1px] border border-[#d8d8d8] bg-white pl-[2px] pr-[2px] text-[#555]">100%<span className="text-[6px] leading-none text-[#333]">↕</span></div>
          <span className="ml-[6px] w-[32px] shrink-0">Rotación</span>
          <div className="flex h-[14px] w-[50px] shrink-0 items-center justify-between rounded-[1px] border border-[#d8d8d8] bg-white pl-[2px] pr-[2px] text-[#555]">0.0 °<span className="text-[6px] leading-none text-[#333]">↕</span></div>
          <div className="ml-[2px]"><Check /></div>
          <span className="ml-[3px] w-[44px] shrink-0">Representar</span>
          <Ic n="net" size={9} />
          <span className="ml-[1px] w-[47px] shrink-0">EPSG:6368</span>
          <svg viewBox="0 0 12 12" width="11" height="11" className="shrink-0"><path d="M6 1c3 0 5 2 5 4.500S9 10 6 10l-2 1.500.5-2C2 9 1 7.500 1 5.500 1 3 3 1 6 1z" fill="#555" /></svg>
        </div>
        {/* cropped-off taskbar, only the tops of its icons show */}
        <div className="flex h-[7px] shrink-0 items-start overflow-hidden bg-[#ecebe4] pl-[18px] pt-[3px]">
          <div className="h-[9px] w-[9px] shrink-0 rounded-full bg-[#b3242a]" />
          <div className="ml-[497px] h-[4px] w-[8px] shrink-0 bg-[#b5b5b0]" />
          <div className="ml-[17px] h-[4px] w-[8px] shrink-0 bg-[#b5b5b0]" />
          <div className="ml-[47px] h-[4px] w-[8px] shrink-0 bg-[#c9c9c4]" />
          <div className="ml-[72px] h-[4px] w-[8px] shrink-0 bg-[#d0605a]" />
          <div className="ml-[17px] h-[4px] w-[8px] shrink-0 bg-[#a8a8a3]" />
          <div className="ml-[19px] h-[4px] w-[10px] shrink-0 bg-[#d0605a]" />
          <div className="ml-[43px] h-[4px] w-[8px] shrink-0 bg-[#d0605a]" />
          <div className="ml-[24px] h-[9px] w-[8px] shrink-0 rounded-full bg-[#d21f2a]" />
          <div className="ml-[297px] h-[2px] w-[18px] shrink-0 bg-[#9a9a95]" />
        </div>
      </div>
    </div>
  )
}
